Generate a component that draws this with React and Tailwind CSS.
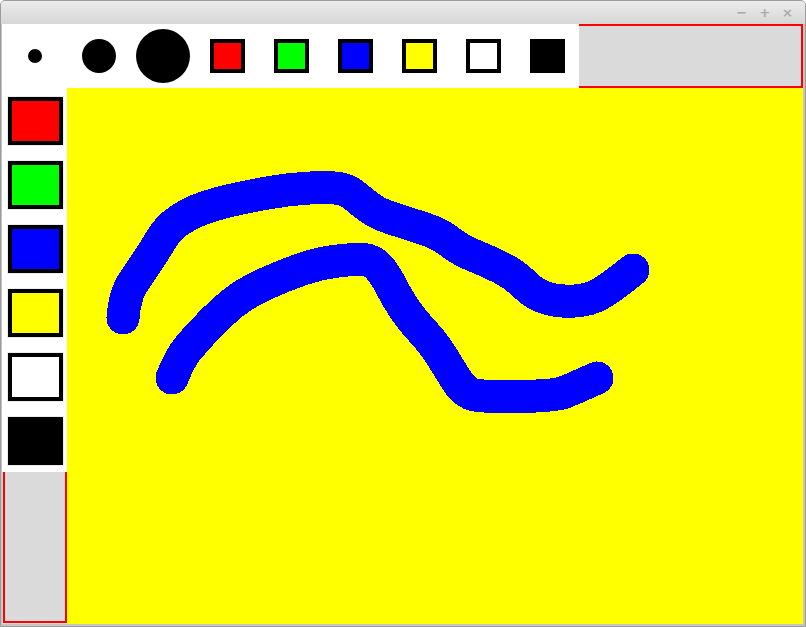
import React from 'react';

const sizes = [14, 34, 54];
const colors = ['#ff0000', '#00ff00', '#0000ff', '#ffff00', '#ffffff', '#000000'];

const upper = [
  [123, 318], [125, 295], [140, 272], [155, 250], [168, 228], [190, 213], [215, 204], [250, 196],
  [290, 189], [330, 187], [348, 190], [362, 202], [378, 214], [410, 224], [440, 234], [460, 250],
  [490, 262], [515, 275], [535, 295], [560, 302], [590, 300], [610, 288], [633, 270],
];
const lower = [
  [172, 378], [180, 358], [195, 340], [212, 322], [232, 303], [252, 290], [285, 275], [320, 263],
  [355, 259], [372, 260], [385, 274], [397, 298], [412, 320], [435, 345], [450, 370], [465, 393],
  [485, 397], [555, 396], [575, 388], [597, 378],
];

// smooth a polyline with quadratic curves through midpoints
function smooth(pts) {
  const mid = (a, b) => [(a[0] + b[0]) / 2, (a[1] + b[1]) / 2];
  let d = `M${pts[0][0]},${pts[0][1]}`;
  for (let i = 1; i < pts.length - 1; i++) {
    const m = mid(pts[i], pts[i + 1]);
    d += ` Q${pts[i][0]},${pts[i][1]} ${m[0]},${m[1]}`;
  }
  const last = pts[pts.length - 1];
  return d + ` L${last[0]},${last[1]}`;
}

function TitleBar() {
  return (
    <div className="h-[23px] flex items-center justify-end gap-[12px] pr-[12px] bg-gradient-to-b from-[#ececec] to-[#d6d6d6] text-[#a9a9a9] font-bold text-[13px] leading-none font-['DejaVu_Sans',sans-serif] select-none">
      <span>−</span>
      <span>+</span>
      <span>×</span>
    </div>
  );
}

export default function App() {
  return (
    <div className="w-[806px] h-[627px] flex flex-col bg-[#c4c4c4] border border-[#9c9c9c] rounded-t-[5px] overflow-hidden">
      <TitleBar />
      <div className="flex-1 flex flex-col pl-[1px] pr-[2px] pb-[2px] min-h-0">
        <div className="h-[64px] flex">
          <div className="w-[577px] flex bg-white pl-[1px]">
            {sizes.map((s) => (
              <div key={s} className="w-[64px] h-[64px] flex items-center justify-center">
                <div className="rounded-full bg-black" style={{ width: s, height: s }} />
              </div>
            ))}
            {colors.map((c) => (
              <div key={c} className="w-[64px] h-[64px] flex items-center justify-center">
                <div className="w-[35px] h-[34px] border-4 border-black" style={{ backgroundColor: c }} />
              </div>
            ))}
          </div>
          <div className="flex-1 bg-[#dadada] border-2 border-l-0 border-[#ff0000]" />
        </div>
        <div className="flex-1 flex min-h-0">
          <div className="w-[65px] flex flex-col bg-[#dadada]">
            <div className="bg-white pl-[1px]">
              {colors.map((c) => (
                <div key={c} className="w-[64px] h-[64px] flex items-center justify-center pt-[1px]">
                  <div className="w-[57px] h-[50px] border border-[#ececec]">
                    <div className="w-full h-full border-4 border-black" style={{ backgroundColor: c }} />
                  </div>
                </div>
              ))}
            </div>
            <div className="flex-1 ml-[1px] mb-[1px] border-2 border-t-0 border-[#ff0000] bg-[#dadada]" />
          </div>
          <div className="flex-1 bg-[#ffff00] relative overflow-hidden">
            <svg
              className="absolute inset-0"
              width="736"
              height="536"
              viewBox="67 88 736 536"
              shapeRendering="crispEdges"
            >
              <path d={smooth(upper)} fill="none" stroke="#0000ff" strokeWidth="33" strokeLinecap="round" strokeLinejoin="round" />
              <path d={smooth(lower)} fill="none" stroke="#0000ff" strokeWidth="33" strokeLinecap="round" strokeLinejoin="round" />
            </svg>
          </div>
        </div>
      </div>
    </div>
  );
}
